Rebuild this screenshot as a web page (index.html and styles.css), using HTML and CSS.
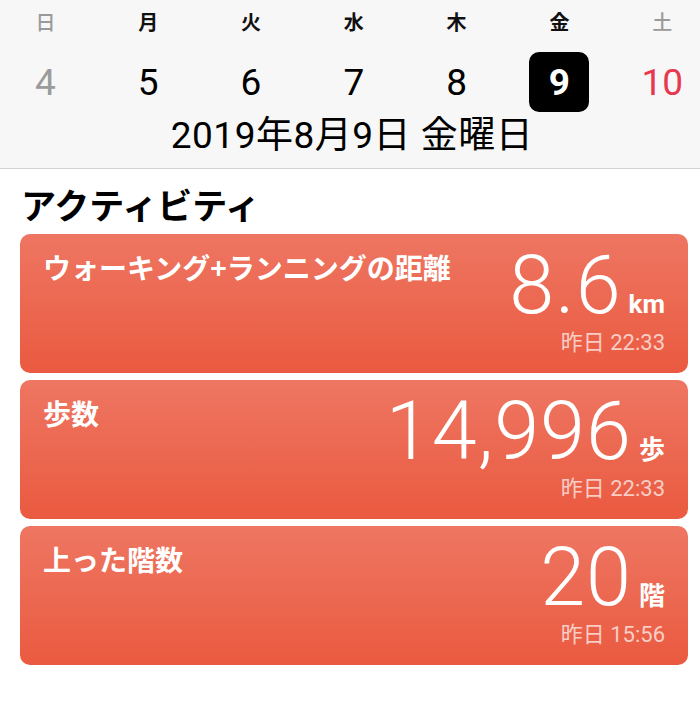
FILE: index.html
```html
<!DOCTYPE html>
<html lang="ja">
<head>
<meta charset="utf-8">
<link rel="stylesheet" href="styles.css">
</head>
<body>
<header class="week">
  <div class="days">
    <div class="wd muted">日</div>
    <div class="wd">月</div>
    <div class="wd">火</div>
    <div class="wd">水</div>
    <div class="wd">木</div>
    <div class="wd">金</div>
    <div class="wd muted">土</div>
  </div>
  <div class="dates">
    <div class="dn"><span class="num gray">4</span></div>
    <div class="dn"><span class="num">5</span></div>
    <div class="dn"><span class="num">6</span></div>
    <div class="dn"><span class="num">7</span></div>
    <div class="dn"><span class="num">8</span></div>
    <div class="dn"><span class="num sel">9</span></div>
    <div class="dn"><span class="num red">10</span></div>
  </div>
  <div class="fulldate">2019年8月9日 金曜日</div>
</header>
<main class="content">
  <h1 class="title">アクティビティ</h1>
  <section class="card">
    <div class="label">ウォーキング+ランニングの距離</div>
    <div class="metric">
      <div class="valrow"><span class="val">8.6</span><span class="unit">km</span></div>
      <div class="time">昨日 22:33</div>
    </div>
  </section>
  <section class="card">
    <div class="label">歩数</div>
    <div class="metric">
      <div class="valrow"><span class="val">14,996</span><span class="unit">歩</span></div>
      <div class="time">昨日 22:33</div>
    </div>
  </section>
  <section class="card">
    <div class="label">上った階数</div>
    <div class="metric">
      <div class="valrow"><span class="val">20</span><span class="unit">階</span></div>
      <div class="time">昨日 15:56</div>
    </div>
  </section>
</main>
</body>
</html>
```
FILE: styles.css
```css
html, body {
  margin: 0;
  padding: 0;
  background: #ffffff;
  overflow: hidden;
}
body {
  font-family: "Roboto", "Noto Sans CJK JP", sans-serif;
  color: #000;
  width: 700px;
}
.week {
  height: 168px;
  background: #f7f7f7;
  border-bottom: 1px solid #d2d2d2;
  overflow: hidden;
}
.days, .dates {
  display: grid;
  grid-template-columns: repeat(7, 102.8px);
  margin-left: -6px;
  width: 720px;
}
.days {
  padding-top: 8px;
}
.wd {
  text-align: center;
  font-family: "Noto Sans CJK JP", sans-serif;
  font-weight: 700;
  font-size: 20px;
  line-height: 28px;
  color: #111;
}
.wd.muted {
  color: #9a9a9a;
  font-weight: 500;
}
.dates {
  margin-top: 16px;
}
.dn {
  display: flex;
  justify-content: center;
}
.num {
  display: flex;
  align-items: center;
  justify-content: center;
  width: 60px;
  height: 60px;
  font-family: "Roboto", sans-serif;
  font-size: 37px;
  font-weight: 400;
  color: #000;
}
.num.gray { color: #9b9b9b; }
.num.red { color: #e8384f; }
.num.sel {
  background: #000;
  color: #fff;
  border-radius: 10px;
  font-weight: 700;
}
.fulldate {
  margin-top: 4px;
  text-align: center;
  font-family: "Roboto", "Noto Sans CJK JP", sans-serif;
  font-size: 37px;
  line-height: 40px;
  letter-spacing: 0.5px;
  padding-left: 4px;
}
.content {
  padding: 14px 12px 0 20px;
}
.title {
  margin: 0 0 9px 1px;
  font-family: "Noto Sans CJK JP", sans-serif;
  font-weight: 700;
  font-size: 35px;
  line-height: 42px;
}
.card {
  height: 139px;
  margin-bottom: 7px;
  border-radius: 10px;
  background: linear-gradient(180deg, #ee7662 0%, #ea5a40 100%);
  color: #fff;
  display: flex;
  justify-content: space-between;
  box-sizing: border-box;
  padding: 0 23px 0 23px;
}
.label {
  padding-top: 16px;
  font-family: "Noto Sans CJK JP", sans-serif;
  font-weight: 700;
  font-size: 28px;
  line-height: 34px;
  white-space: nowrap;
}
.metric {
  display: flex;
  flex-direction: column;
  align-items: flex-end;
  padding-top: 12px;
}
.valrow {
  display: flex;
  align-items: baseline;
  gap: 7px;
}
.val {
  font-family: "Roboto", sans-serif;
  font-weight: 300;
  font-size: 81px;
  line-height: 80px;
  letter-spacing: 1px;
}
.unit {
  font-family: "Roboto", "Noto Sans CJK JP", sans-serif;
  font-weight: 700;
  font-size: 26px;
}
.time {
  margin-top: 4px;
  font-family: "Roboto", "Noto Sans CJK JP", sans-serif;
  font-size: 22px;
  line-height: 26px;
  color: rgba(255, 255, 255, 0.7);
}
```
